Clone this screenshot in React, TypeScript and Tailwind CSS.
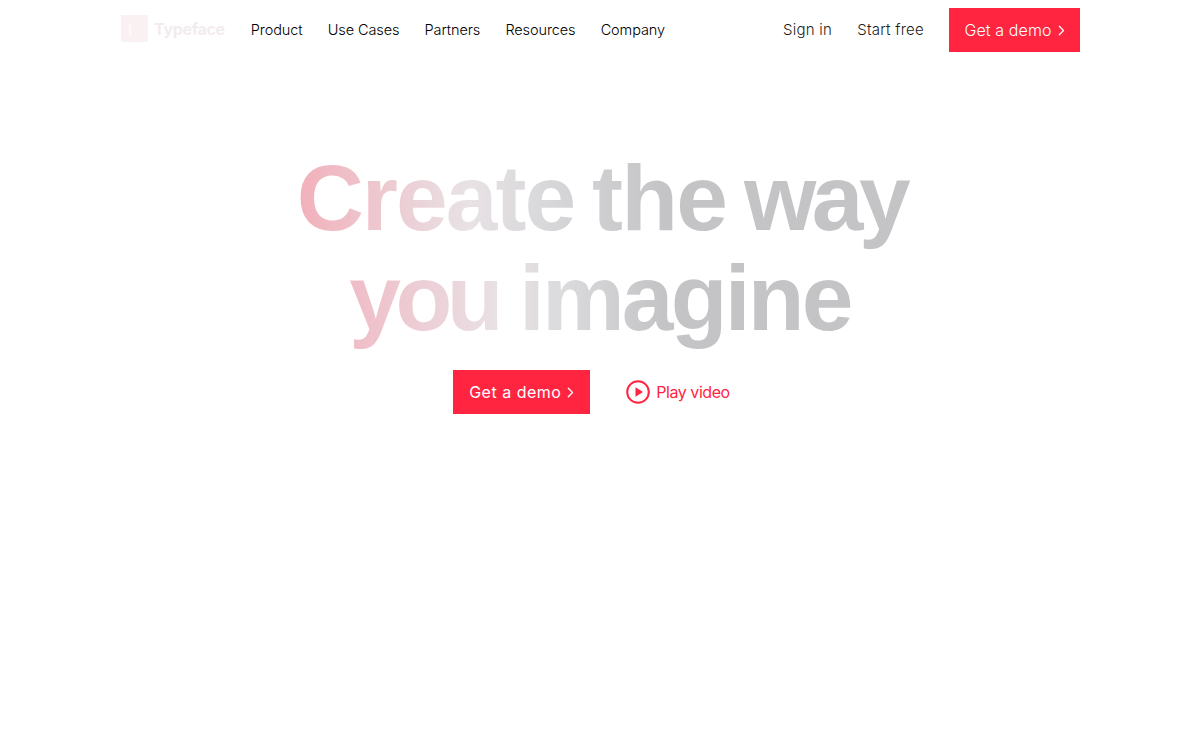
import React from "react";

function Chevron({ className }: { className: string }) {
  return (
    <svg viewBox="0 0 8 12" className={className} fill="none" stroke="currentColor" strokeWidth="1.5" strokeLinecap="round" strokeLinejoin="round">
      <path d="M1.5 1.2 6.3 6l-4.8 4.8" />
    </svg>
  );
}

function DemoButton({ className }: { className: string }) {
  return (
    <a className={`flex h-11 items-center justify-center gap-[6px] bg-[#ff2541] text-[16px] text-white ${className}`}>
      <span>Get a demo</span>
      <Chevron className="mt-px h-[11px] w-[7px]" />
    </a>
  );
}

const links = ["Product", "Use Cases", "Partners", "Resources", "Company"];

export default function App() {
  return (
    <div className="h-[732px] w-[1200px] overflow-hidden bg-white font-['Inter',sans-serif]">
      <header className="mx-auto flex h-[60px] w-[960px] items-center pl-px">
        <div className="mb-[3px] flex items-center gap-[6px]">
          <div className="flex h-[27px] w-[27px] items-center bg-[#faf1f2] pl-[8px]">
            <div className="h-[12px] w-[2px] bg-[#fdfafa]" />
          </div>
          <span className="mt-[1px] text-[16px] font-bold tracking-[-0.3px] text-[#f3ecef]">Typeface</span>
        </div>
        <nav className="ml-[26px] flex items-center gap-[25.2px] text-[14.5px] font-[350] tracking-[-0.1px] text-[#000000]">
          {links.map((l) => (
            <a key={l}>{l}</a>
          ))}
        </nav>
        <div className="ml-auto flex items-center text-[15px] font-[350] tracking-[0.25px] text-[#1c1c20]">
          <a>Sign in</a>
          <a className="ml-[25px]">Start free</a>
          <DemoButton className="ml-[25px] w-[131px] tracking-[0.1px]" />
        </div>
      </header>
      <main className="flex flex-col items-center pt-[88px]">
        <h1 className="flex flex-col items-center font-['Liberation_Sans',sans-serif] text-[93px] font-bold leading-[100px]">
          <span className="-mb-[14px] ml-[8px] bg-[linear-gradient(90deg,#f2b0bb_0%,#e8e2e5_28%,#d6d6d8_42%,#c4c4c6_60%,#c4c4c6_100%)] bg-clip-text pb-[14px] pr-[5px] text-transparent [word-spacing:-8px]">
            <span className="tracking-[-2px]">Create</span> <span className="tracking-[-1.8px]">the</span> <span className="tracking-[-4.5px]">way</span>
          </span>
          <span className="-mb-[14px] ml-[3px] bg-[linear-gradient(90deg,#f0bcc7_0%,#e8e2e5_30%,#d9d9db_44%,#c4c4c6_62%,#c4c4c6_100%)] bg-clip-text pb-[14px] pr-[3px] text-transparent [word-spacing:-5px]">
            <span className="tracking-[-5.5px]">you</span> <span className="tracking-[-2.8px]">imagine</span>
          </span>
        </h1>
        <div className="mt-[22px] flex items-center pr-[17px]">
          <DemoButton className="w-[137px] tracking-[0.5px]" />
          <a className="ml-[36px] flex items-center gap-[6px] text-[16px] tracking-[-0.45px] text-[#ff2541]">
            <svg viewBox="0 0 24 24" className="h-6 w-6" fill="none">
              <circle cx="12" cy="12" r="10.8" stroke="#ff2541" strokeWidth="2" />
              <path d="M9.5 7.2v9.6l7.5-4.8z" fill="#ff2541" />
            </svg>
            <span>Play video</span>
          </a>
        </div>
      </main>
    </div>
  );
}
